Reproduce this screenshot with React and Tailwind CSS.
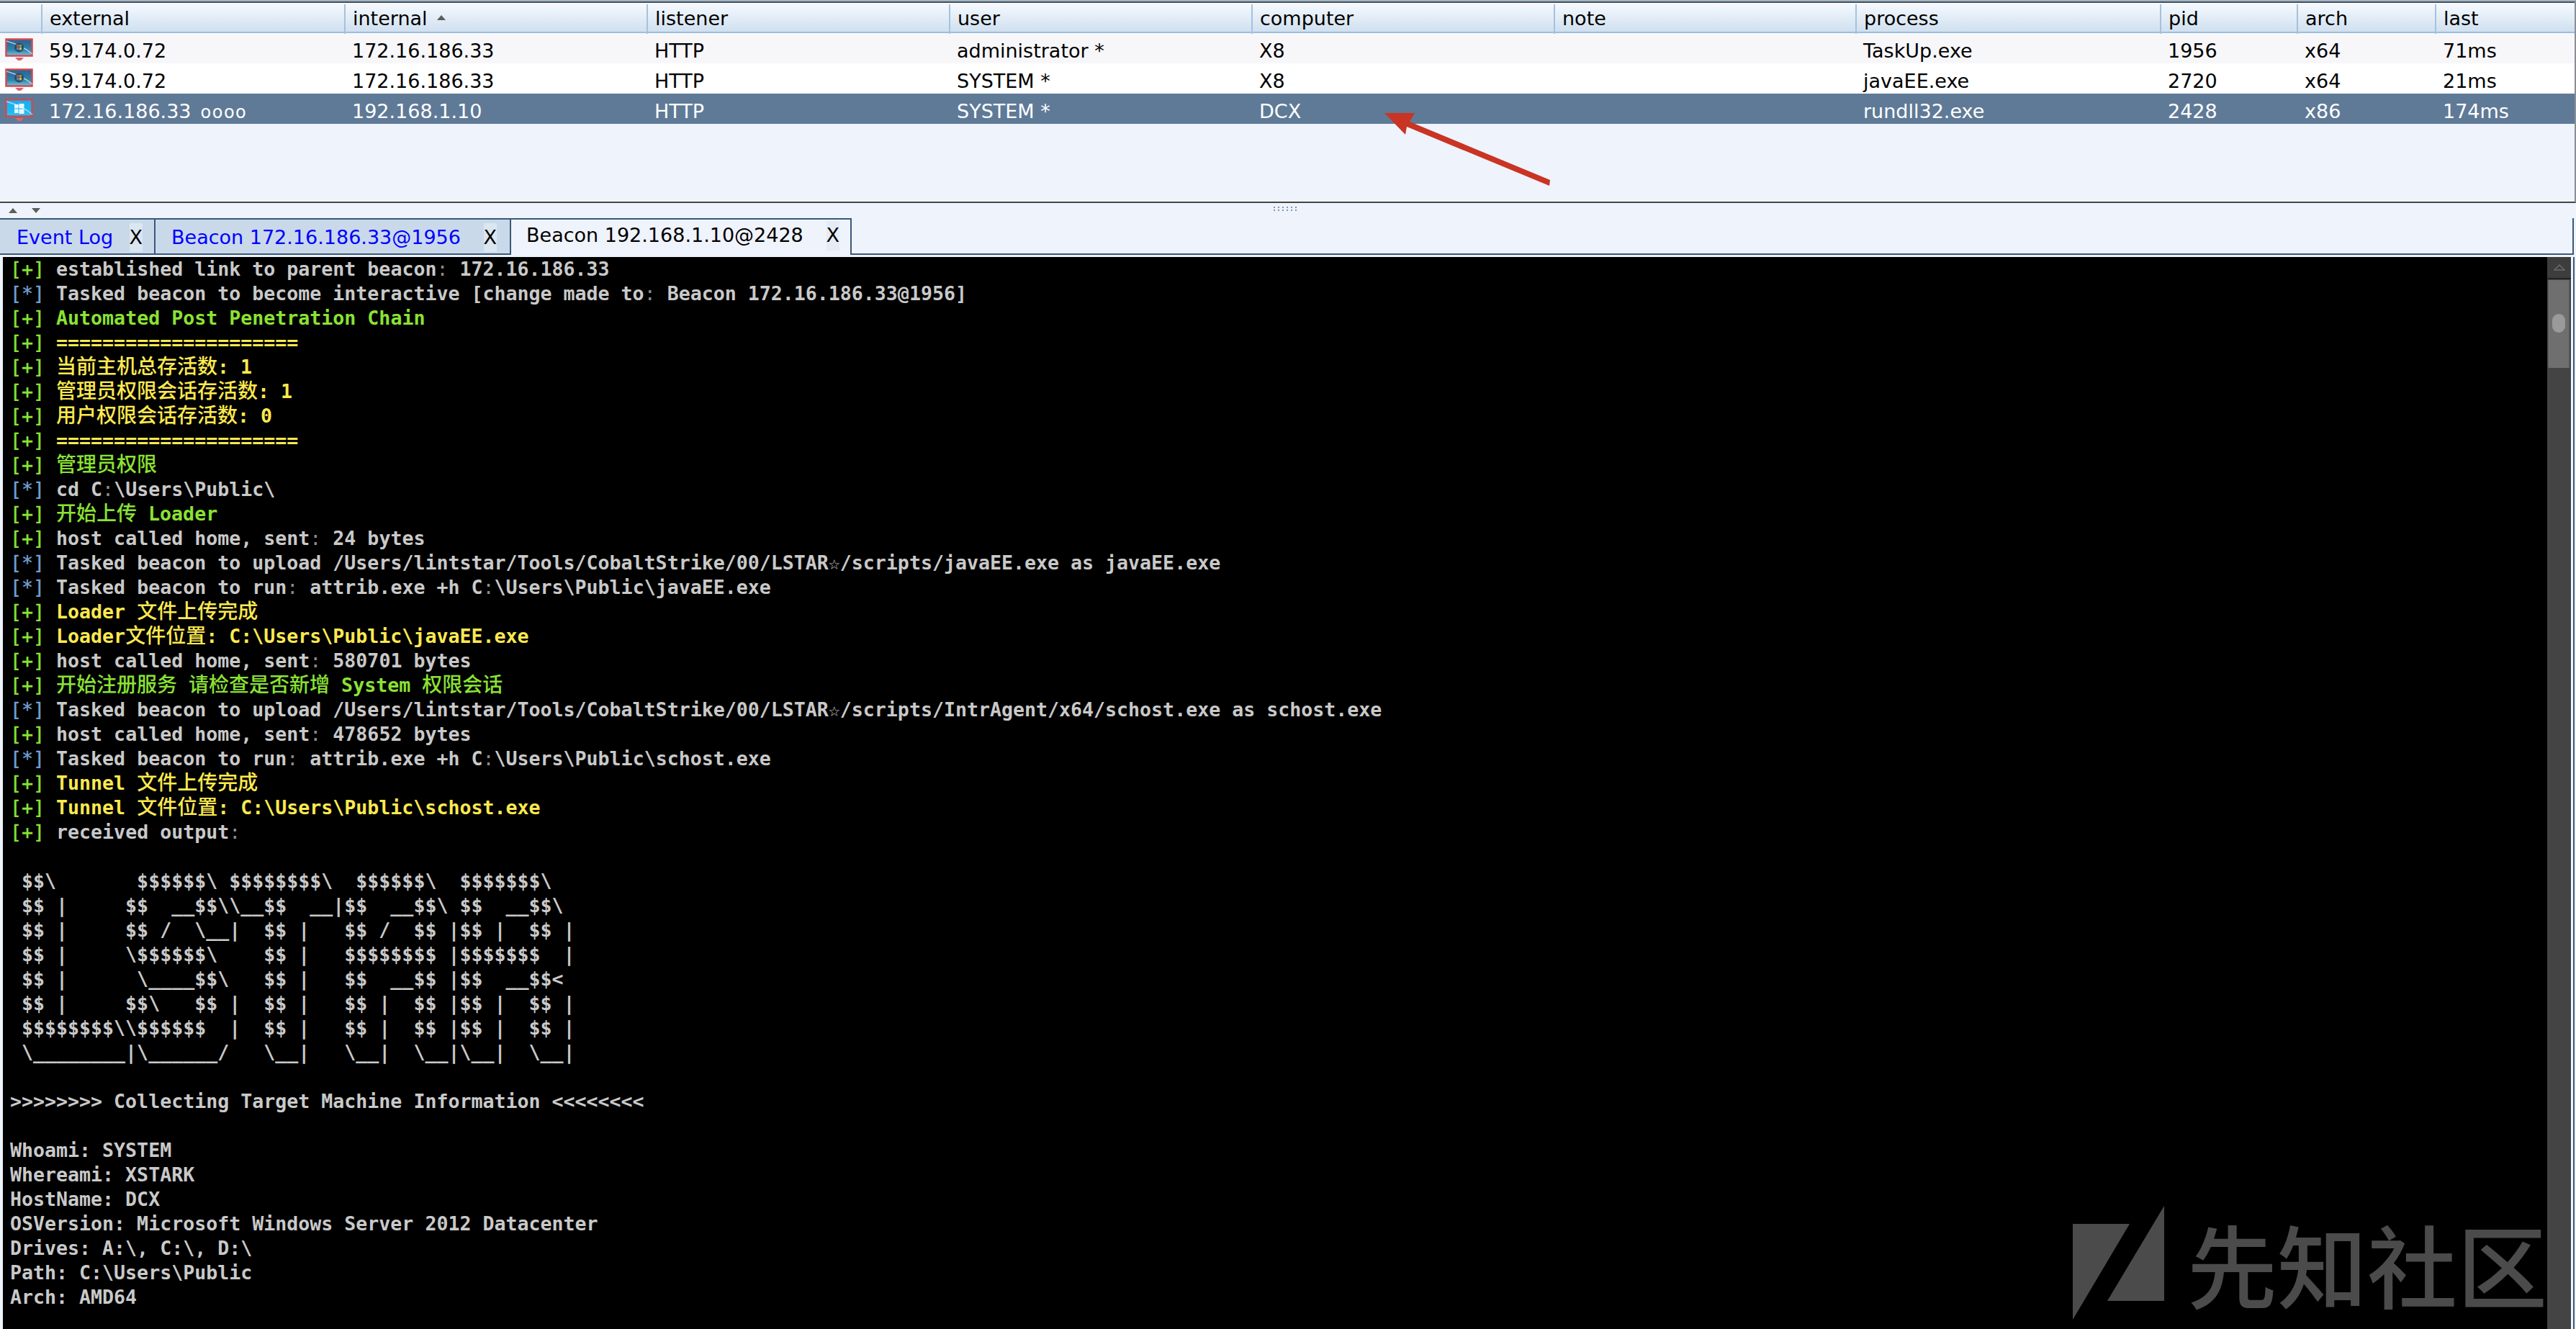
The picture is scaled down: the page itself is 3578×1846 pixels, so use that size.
import React from "react";

const GRID = "grid grid-cols-[57px_421px_420px_420px_420px_420px_419px_423px_190px_192px_1fr]";

const COLUMNS = ["", "external", "internal", "listener", "user", "computer", "note", "process", "pid", "arch", "last"];

const SESSIONS = [
  { os: "win7", external: "59.174.0.72", internal: "172.16.186.33", user: "administrator *", computer: "X8", process: "TaskUp.exe", pid: "1956", arch: "x64", last: "71ms", bg: "bg-[#f7f7fa] text-black" },
  { os: "win7", external: "59.174.0.72", internal: "172.16.186.33", user: "SYSTEM *", computer: "X8", process: "javaEE.exe", pid: "2720", arch: "x64", last: "21ms", bg: "bg-white text-black" },
  { os: "win8", external: "172.16.186.33", links: true, internal: "192.168.1.10", user: "SYSTEM *", computer: "DCX", process: "rundll32.exe", pid: "2428", arch: "x86", last: "174ms", bg: "bg-[#5f7a97] text-white" },
];

const PATH = "/Users/lintstar/Tools/CobaltStrike/00/LSTAR☆/scripts";

const LOG = [
  ["+", "text", "established link to parent beacon: 172.16.186.33"],
  ["*", "text", "Tasked beacon to become interactive [change made to: Beacon 172.16.186.33@1956]"],
  ["+", "green", "Automated Post Penetration Chain"],
  ["+", "yellow", "====================="],
  ["+", "yellow", "当前主机总存活数: 1"],
  ["+", "yellow", "管理员权限会话存活数: 1"],
  ["+", "yellow", "用户权限会话存活数: 0"],
  ["+", "yellow", "====================="],
  ["+", "green", "管理员权限"],
  ["*", "text", "cd C:\\Users\\Public\\"],
  ["+", "green", "开始上传 Loader"],
  ["+", "text", "host called home, sent: 24 bytes"],
  ["*", "text", `Tasked beacon to upload ${PATH}/javaEE.exe as javaEE.exe`],
  ["*", "text", "Tasked beacon to run: attrib.exe +h C:\\Users\\Public\\javaEE.exe"],
  ["+", "yellow", "Loader 文件上传完成"],
  ["+", "yellow", "Loader文件位置: C:\\Users\\Public\\javaEE.exe"],
  ["+", "text", "host called home, sent: 580701 bytes"],
  ["+", "green", "开始注册服务 请检查是否新增 System 权限会话"],
  ["*", "text", `Tasked beacon to upload ${PATH}/IntrAgent/x64/schost.exe as schost.exe`],
  ["+", "text", "host called home, sent: 478652 bytes"],
  ["*", "text", "Tasked beacon to run: attrib.exe +h C:\\Users\\Public\\schost.exe"],
  ["+", "yellow", "Tunnel 文件上传完成"],
  ["+", "yellow", "Tunnel 文件位置: C:\\Users\\Public\\schost.exe"],
  ["+", "text", "received output:"],
];

const BANNER = [
  "",
  " $$\\       $$$$$$\\ $$$$$$$$\\  $$$$$$\\  $$$$$$$\\",
  " $$ |     $$  __$$\\\\__$$  __|$$  __$$\\ $$  __$$\\",
  " $$ |     $$ /  \\__|  $$ |   $$ /  $$ |$$ |  $$ |",
  " $$ |     \\$$$$$$\\    $$ |   $$$$$$$$ |$$$$$$$  |",
  " $$ |      \\____$$\\   $$ |   $$  __$$ |$$  __$$<",
  " $$ |     $$\\   $$ |  $$ |   $$ |  $$ |$$ |  $$ |",
  " $$$$$$$$\\\\$$$$$$  |  $$ |   $$ |  $$ |$$ |  $$ |",
  " \\________|\\______/   \\__|   \\__|  \\__|\\__|  \\__|",
  "",
  ">>>>>>>> Collecting Target Machine Information <<<<<<<<",
  "",
  "Whoami: SYSTEM",
  "Whereami: XSTARK",
  "HostName: DCX",
  "OSVersion: Microsoft Windows Server 2012 Datacenter",
  "Drives: A:\\, C:\\, D:\\",
  "Path: C:\\Users\\Public",
  "Arch: AMD64",
];

const TONES = {
  text: "text-[#c9c9c9]",
  green: "text-[#8ae234]",
  yellow: "text-[#fce94f]",
};

// CJK runs are wider than two thirds of the mono grid, so they get their own size
const Mixed = ({ text, dimColons }) =>
  text.split(/([\u4e00-\u9fff]+|:|☆)/).map((part, i) => {
    if (/^[\u4e00-\u9fff]+$/.test(part)) {
      return (
        <span key={i} className="font-['Noto_Sans_CJK_SC',sans-serif] text-[28px] leading-[0] font-medium">
          {part}
        </span>
      );
    }
    if (part === ":" && dimColons) {
      return <span key={i} className="font-normal text-[#8c8c8c]">{part}</span>;
    }
    if (part === "☆") {
      return <span key={i} className="font-normal">{part}</span>;
    }
    return part;
  });

const OsIcon = ({ os }) => (
  <svg width="40" height="32" viewBox="0 0 40 32" className="ml-[7px]">
    <defs>
      <linearGradient id={`screen-${os}`} x1="0" y1="0" x2="0" y2="1">
        <stop offset="0" stopColor={os === "win7" ? "#2c5f8f" : "#18aef0"} />
        <stop offset="0.65" stopColor={os === "win7" ? "#2e86ad" : "#19b8f2"} />
        <stop offset="1" stopColor={os === "win7" ? "#7cc4dc" : "#2fc4f5"} />
      </linearGradient>
    </defs>
    <rect x="1.5" y="1.5" width="36" height="23" fill={`url(#screen-${os})`} stroke="#cf4a50" strokeWidth="2.5" />
    <path d="M2 4 L14 8 L30 16 L38 22" stroke="#dcecf5" strokeWidth="1.5" fill="none" opacity="0.7" />
    <path d="M14 27 H26 L22 31 H18 Z" fill="#d9666b" />
    {os === "win7" ? (
      <g>
        <circle cx="19.5" cy="13" r="6.5" fill="#2a4a6e" />
        <rect x="16" y="9" width="3.2" height="3.4" fill="#c9573a" />
        <rect x="19.8" y="9" width="3.2" height="3.4" fill="#8aa83f" />
        <rect x="16" y="13" width="3.2" height="3.4" fill="#4a86c5" />
        <rect x="19.8" y="13" width="3.2" height="3.4" fill="#e6b93d" />
      </g>
    ) : (
      <g fill="#eaf8ff">
        <rect x="13" y="8" width="5.5" height="5.5" />
        <rect x="19.5" y="7" width="7" height="6.5" />
        <rect x="13" y="14.5" width="5.5" height="5.5" />
        <rect x="19.5" y="14.5" width="7" height="6.5" />
      </g>
    )}
  </svg>
);

const Triangle = ({ down = false, className = "" }) => (
  <svg width="12" height="7" viewBox="0 0 12 7" className={className}>
    <path d={down ? "M0 0 H12 L6 7 Z" : "M6 0 L12 7 H0 Z"} fill="#5d5d5d" />
  </svg>
);

const LinkMarks = ({ show }) =>
  show ? <span className="ml-[13px] text-[24px] tracking-[1.5px]">oooo</span> : null;

const SessionTable = () => (
  <div className="h-[282px] shrink-0 border-t-2 border-t-[#9fb4c8] border-b-2 border-b-[#454545] border-r-2 border-r-[#8a8f96] bg-[#eff3fb] relative">
    <div className="border-t-2 border-[#4a4f55]">
      <div className={`${GRID} h-[42px] pt-[2px] bg-gradient-to-b from-[#f6faff] to-[#d0e0ef] border-b-2 border-[#9dbddb] text-[27px] text-black`}>
        {COLUMNS.map((name, i) => (
          <div key={i} className={`flex items-center gap-[13px] pl-[10px] ${i > 0 ? "border-l-2 border-[#a5c2dc]" : ""}`}>
            <span>{name}</span>
            {name === "internal" && <Triangle className="mt-[-4px]" />}
          </div>
        ))}
      </div>
      {SESSIONS.map((s, i) => (
        <div key={i} className={`${GRID} h-[42px] pt-[5px] items-center text-[27px] ${s.bg}`}>
          <div className="flex items-center mt-[-5px]"><OsIcon os={s.os} /></div>
          <div className="pl-[11px] whitespace-nowrap">
            {s.external}
            <LinkMarks show={s.links} />
          </div>
          <div className="pl-[11px]">{s.internal}</div>
          <div className="pl-[11px]">HTTP</div>
          <div className="pl-[11px]">{s.user}</div>
          <div className="pl-[11px]">{s.computer}</div>
          <div className="pl-[11px]"></div>
          <div className="pl-[11px]">{s.process}</div>
          <div className="pl-[11px]">{s.pid}</div>
          <div className="pl-[11px]">{s.arch}</div>
          <div className="pl-[11px]">{s.last}</div>
        </div>
      ))}
    </div>
    {/* annotation arrow drawn on the screenshot */}
    <svg className="absolute left-[1910px] top-[150px]" width="260" height="120" viewBox="1910 154 260 120">
      <polygon points="1923,159 1965,159 1958,171 2153,252 2152,260 1954,178 1952,189" fill="#c93424" />
    </svg>
  </div>
);

const Splitter = () => (
  <div className="h-[21px] shrink-0 relative flex items-center gap-[20px] pl-[12px]">
    <Triangle />
    <Triangle down />
    <div className="absolute left-[1767px] top-[4px] w-[37px] h-[7px] bg-[radial-gradient(#7d96b4_1px,transparent_1.2px)] bg-[length:6px_4px]" />
  </div>
);

const Tab = ({ label, width, textOffset }) => (
  <div className={`${width} ${textOffset} h-[51px] shrink-0 flex items-center justify-between pt-[3px] bg-[#c9d9ea] border-t-2 border-b-2 border-[#3a5878] border-r-2 border-r-[#3a5878] text-[27px]`}>
    <span className="text-[#0000ff]">{label}</span>
    <span className="text-black bg-[#dbe6f1]">X</span>
  </div>
);

const Tabs = () => (
  <div className="h-[51px] shrink-0 flex">
    <Tab label="Event Log" width="w-[216px]" textOffset="pl-[23px] pr-[16px]" />
    <Tab label="Beacon 172.16.186.33@1956" width="w-[494px]" textOffset="pl-[22px] pr-[18px]" />
    <div className="w-[473px] h-[51px] shrink-0 flex items-center justify-between pl-[21px] pr-[15px] pb-[4px] border-t-2 border-r-2 border-[#3a5878] text-[27px] text-black">
      <span>Beacon 192.168.1.10@2428</span>
      <span className="bg-[#e6ecf5]">X</span>
    </div>
    <div className="flex-1 border-b-2 border-[#3a5878] border-r-2 mr-[3px]" />
  </div>
);

const Watermark = () => (
  <div className="absolute right-0 bottom-[13px] flex items-end font-normal">
    <svg width="127" height="158" viewBox="0 0 127 158" className="mr-[32px]">
      <polygon points="0,25 79,25 0,158" fill="#4b4b4b" />
      <polygon points="127,0 127,132 48,132" fill="#4b4b4b" />
    </svg>
    <span className="font-['Noto_Sans_CJK_SC',sans-serif] text-[125px] leading-[150px] font-medium text-[#4b4b4b] mb-[4px] whitespace-nowrap">
      先知社区
    </span>
  </div>
);

const Scrollbar = () => (
  <div className="w-[33px] shrink-0 flex flex-col bg-[#444444]">
    <div className="h-[31px] shrink-0 flex items-center justify-center bg-[#3d3d3d] border-b-2 border-[#222222]">
      <svg width="16" height="9" viewBox="0 0 16 9">
        <path d="M8 1 L15 8 H1 Z" fill="none" stroke="#6b6b6b" strokeWidth="1.5" />
      </svg>
    </div>
    <div className="h-[122px] mt-[1px] mx-[1px] w-[30px] flex items-center justify-center bg-[#6f6f6f] border-x border-[#5d5d5d]">
      <div className="w-[18px] h-[26px] mb-[2px] rounded-full bg-[#9a9a9a]" />
    </div>
  </div>
);

const Terminal = () => (
  <div className="flex-1 min-h-0 mt-[3px] ml-[4px] mr-[2px] pr-[3px] border-r-2 border-[#3a5878] flex overflow-hidden">
    <div className="flex-1 min-w-0 relative bg-black overflow-hidden pl-[10px] font-['DejaVu_Sans_Mono','Noto_Sans_CJK_SC',monospace] text-[26.6px] leading-[34px] font-bold whitespace-pre">
      {LOG.map(([mark, tone, text], i) => (
        <div key={i} className={`h-[34px] ${TONES[tone]}`}>
          <span className="font-normal text-[#8ae234] [-webkit-text-stroke:0.4px]">
            {mark === "+" ? "[+]" : <span className="text-[#729fcf]">[*]</span>}
          </span>{" "}
          <Mixed text={text} dimColons={tone === "text"} />
        </div>
      ))}
      {BANNER.map((text, i) => (
        <div key={i} className="h-[34px] text-[#c9c9c9]">{text}</div>
      ))}
      <Watermark />
    </div>
    <Scrollbar />
  </div>
);

export default function App() {
  return (
    <div className="h-screen flex flex-col overflow-hidden bg-[#eff3fb] font-['DejaVu_Sans',sans-serif]">
      <SessionTable />
      <Splitter />
      <Tabs />
      <Terminal />
    </div>
  );
}
